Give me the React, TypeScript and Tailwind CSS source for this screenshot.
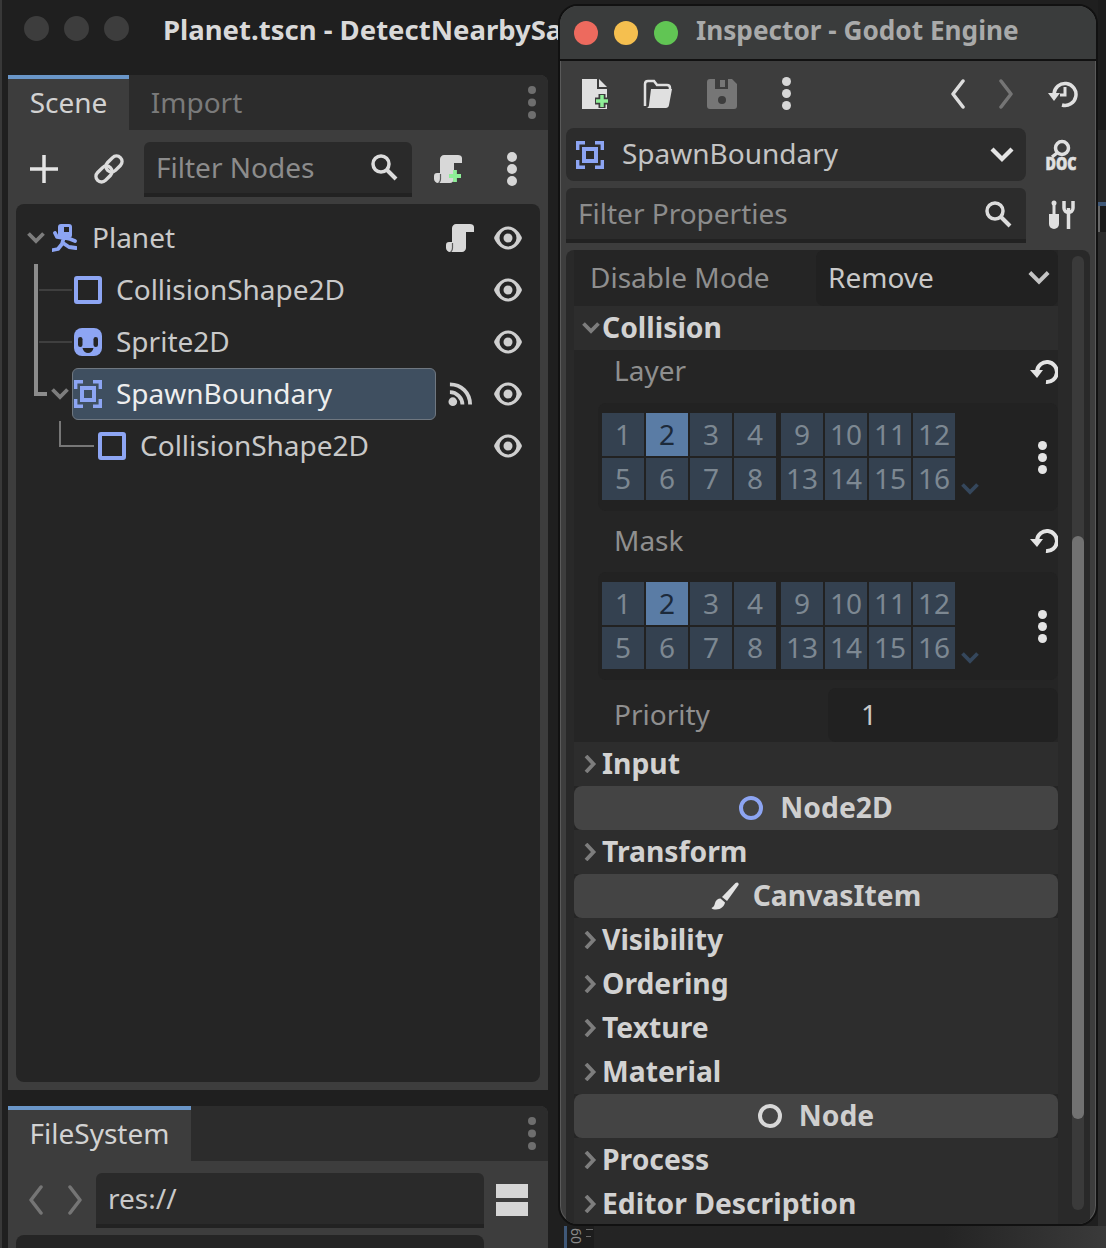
import React from "react";

const B = "#8da5f3";

function Eye() {
  return (
    <svg width="28" height="24" viewBox="0 0 28 24">
      <path d="M14 0.5C6.500 0.500 1.500 8 0 12c1.500 4 6.500 11.500 14 11.500S26.500 16 28 12C26.500 8 21.500 0.500 14 0.500Z" fill="#cfcfcf" />
      <circle cx="14" cy="12" r="8.500" fill="#252525" />
      <circle cx="14" cy="12" r="4.500" fill="#cfcfcf" />
    </svg>
  );
}

function Square() {
  return (
    <svg width="28" height="28" viewBox="0 0 28 28">
      <rect x="2" y="2" width="24" height="24" rx="1" fill="none" stroke={B} strokeWidth="4" />
    </svg>
  );
}

function Sprite() {
  return (
    <svg width="28" height="28" viewBox="0 0 28 28">
      <rect width="28" height="28" rx="8" fill={B} />
      <rect x="4" y="9" width="4.500" height="10" rx="2.200" fill="#252525" />
      <rect x="19.500" y="9" width="4.500" height="10" rx="2.200" fill="#252525" />
      <path d="M8.500 20h11c-.5 3-3 5-5.500 5s-5-2-5.500-5Z" fill="#252525" />
    </svg>
  );
}

function Area() {
  return (
    <svg width="28" height="28" viewBox="0 0 28 28">
      <path d="M1.700 9V1.700H9M19 1.700h7.300V9M26.300 19v7.300H19M9 26.300H1.700V19" fill="none" stroke={B} strokeWidth="3.400" />
      <rect x="8" y="8" width="12" height="12" fill="none" stroke={B} strokeWidth="4" />
    </svg>
  );
}

function Runner() {
  return (
    <svg width="25" height="28" viewBox="0 0 25 28">
      <rect x="6" y="0" width="14" height="14" rx="3" fill={B} />
      <rect x="12" y="3" width="5" height="5" fill="#252525" />
      <path d="M11 14L5 13 3 9M13 14L18 15 23 17M12 13L10 20 6 25 1 26M11 19L17 23 24 24" fill="none" stroke={B} strokeWidth="3.800" strokeLinejoin="round" strokeLinecap="round" />
    </svg>
  );
}

function Scroll({ plus = false }: { plus?: boolean }) {
  return (
    <svg width="28" height="28" viewBox="0 0 28 28">
      <path d="M10 0h14c2 0 4 1 4 3v5h-8v16c0 2-2 4-4 4H4c-2 0-4-2-4-4v-3c0-2 1-3 3-3h3V4c0-2 2-4 4-4Z" fill="#d8d8d8" />
      <path d="M6.500 19v5c0 2-1 3.500-2 4" fill="none" stroke="#5a5a5a" strokeWidth="1.200" />
      {plus && <path d="M21 15v12M15 21h12" stroke="#8eef97" strokeWidth="3.800" />}
    </svg>
  );
}

function Chevron({ dir = "down", color = "#7d7d7d", size = 18, w = 3.800 }: { dir?: "down" | "right"; color?: string; size?: number; w?: number }) {
  const d = dir === "down" ? "M1.500 4.500l7.500 7.500 7.500-7.500" : "M4 1l7.500 8L4 17";
  return (
    <svg width={size} height={size} viewBox="0 0 18 18">
      <path d={d} fill="none" stroke={color} strokeWidth={w} />
    </svg>
  );
}

function Dots({ color = "#d6d6d6", r = 4.500, gap = 12 }: { color?: string; r?: number; gap?: number }) {
  return (
    <svg width={r * 2} height={r * 2 + gap * 2} viewBox={`0 0 ${r * 2} ${r * 2 + gap * 2}`}>
      <circle cx={r} cy={r} r={r} fill={color} />
      <circle cx={r} cy={r + gap} r={r} fill={color} />
      <circle cx={r} cy={r + gap * 2} r={r} fill={color} />
    </svg>
  );
}

function Search() {
  return (
    <svg width="28" height="28" viewBox="0 0 28 28">
      <circle cx="11" cy="11" r="8" fill="none" stroke="#dcdcdc" strokeWidth="3.500" />
      <path d="M17 17l9 9" stroke="#dcdcdc" strokeWidth="4" />
    </svg>
  );
}

function Angle({ dir, color }: { dir: "l" | "r"; color: string }) {
  return (
    <svg width="16" height="30" viewBox="0 0 16 30">
      <path d={dir === "l" ? "M13 2L3 15l10 13" : "M3 2l10 13L3 28"} fill="none" stroke={color} strokeWidth="3.500" strokeLinecap="round" strokeLinejoin="round" />
    </svg>
  );
}

function Reset() {
  return (
    <svg width="28" height="26" viewBox="0 0 28 26">
      <path d="M7 12A10 10 0 1 1 16 23" fill="none" stroke="#e4e4e4" strokeWidth="4" />
      <path d="M0 11h13l-6 8Z" fill="#e4e4e4" />
    </svg>
  );
}

function Row({ indent, icon, label, extra }: { indent: string; icon: React.ReactNode; label: string; extra?: React.ReactNode }) {
  return (
    <div className="flex h-[52px] items-center">
      <div className={`flex items-center gap-[14px] ${indent}`}>
        {icon}
        <span className="pb-[2px] text-[#c9c9c9]">{label}</span>
      </div>
      <div className="ml-auto flex items-center gap-[20px] pr-[18px]">
        {extra}
        <Eye />
      </div>
    </div>
  );
}

function Bitmask() {
  const cell = (n: number) => (
    <div
      key={n}
      className={`flex h-full w-[42px] items-center justify-center pb-[2px] text-[28px] ${
        n === 2 ? "bg-[#5a7ca5] text-[#1c2a3b]" : "bg-[#344150] text-[#7d8892]"
      }`}
    >
      {n}
    </div>
  );
  const group = (nums: number[]) => (
    <div className="grid grid-cols-[repeat(4,42px)] grid-rows-[43px_42px] gap-[2px]">{nums.map(cell)}</div>
  );
  return (
    <div className="ml-[24px] flex h-[108px] w-[460px] items-start rounded-lg bg-[#222222] pl-[4px] pt-[10px]">
      <div className="flex gap-[5px]">
        {group([1, 2, 3, 4, 5, 6, 7, 8])}
        {group([9, 10, 11, 12, 13, 14, 15, 16])}
      </div>
      <div className="ml-[6px] self-end pb-[13px]">
        <Chevron color="#35475c" />
      </div>
      <div className="ml-auto mr-[11px] pt-[28px]">
        <Dots color="#e4e4e4" r={4.500} gap={12} />
      </div>
    </div>
  );
}

function Section({ label, open = false }: { label: string; open?: boolean }) {
  return (
    <div className="flex h-[44px] items-center bg-[#2d2d2d]">
      <div className="ml-[8px] flex w-[20px]">
        <Chevron dir={open ? "down" : "right"} />
      </div>
      <span className="pb-[2px] text-[28.300px] font-bold text-[#d2d2d2]">{label}</span>
    </div>
  );
}

function ClassBar({ icon, label }: { icon: React.ReactNode; label: string }) {
  return (
    <div className="flex h-[44px] items-center justify-center gap-[14px] rounded-lg bg-[#444444]">
      {icon}
      <span className="pb-[1px] text-[28.300px] font-bold text-[#cfcfcf]">{label}</span>
    </div>
  );
}

function Ring({ color }: { color: string }) {
  return (
    <svg className="mr-[3px]" width="24" height="24" viewBox="0 0 24 24">
      <circle cx="12" cy="12" r="10" fill="none" stroke={color} strokeWidth="4" />
    </svg>
  );
}

export default function App() {
  return (
    <div className="relative h-[1248px] w-[1106px] overflow-hidden bg-[#1f1f1f] text-[28px] leading-none [font-family:'Noto_Sans',sans-serif]">
      {/* Editor window */}
      <div className="absolute inset-0 border-l-2 border-[#383838] pl-[6px]">
        <div className="flex h-[75px] items-start pt-[16px]">
          <div className="ml-[16px] flex gap-[15px]">
            <span className="h-[25px] w-[25px] rounded-full bg-[#3d3d3d]" />
            <span className="h-[25px] w-[25px] rounded-full bg-[#3d3d3d]" />
            <span className="h-[25px] w-[25px] rounded-full bg-[#3d3d3d]" />
          </div>
          <span className="ml-[34px] whitespace-nowrap text-[27.500px] font-bold text-[#d9d9d9]">Planet.tscn - DetectNearbySamples</span>
        </div>

        <div className="w-[540px] rounded-t-lg bg-[#3d3d3d]">
          <div className="flex h-[55px] items-stretch rounded-t-lg bg-[#2c2c2c]">
            <div className="flex w-[121px] items-center justify-center border-t-4 border-[#6a96c8] bg-[#3d3d3d] pb-[6px] text-[#d2d2d2]">Scene</div>
            <div className="flex w-[135px] items-center justify-center pb-[2px] text-[#7a7a7a]">Import</div>
            <div className="ml-auto flex items-center pr-[12px]">
              <Dots color="#6e6e6e" r={4} gap={12.500} />
            </div>
          </div>
          <div className="flex h-[74px] items-center pt-[4px]">
            <svg className="ml-[22px]" width="28" height="28" viewBox="0 0 28 28">
              <path d="M14 0v28M0 14h28" stroke="#e4e4e4" strokeWidth="3.500" />
            </svg>
            <svg className="ml-[36px]" width="30" height="30" viewBox="0 0 30 30">
              <rect x="11" y="4.500" width="18" height="11" rx="5.500" transform="rotate(-45 20 10)" fill="none" stroke="#dcdcdc" strokeWidth="3.500" />
              <rect x="1" y="14.500" width="18" height="11" rx="5.500" transform="rotate(-45 10 20)" fill="none" stroke="#dcdcdc" strokeWidth="3.500" />
            </svg>
            <div className="ml-[20px] flex h-[55px] w-[268px] items-center rounded-t-md border-b-4 border-[#222222] bg-[#2a2a2a] pl-[12px] pr-[14px] text-[#8c8c8c]">
              Filter Nodes
              <div className="ml-auto">
                <Search />
              </div>
            </div>
            <div className="ml-[22px]">
              <Scroll plus />
            </div>
            <div className="ml-[45px]">
              <Dots r={5} gap={12} />
            </div>
          </div>
          <div className="px-[8px] pb-[8px]">
            <div className="relative h-[878px] rounded-lg bg-[#252525] pt-[8px]">
              {/* guide lines of the tree */}
              <span className="absolute left-[18px] top-[60px] h-[132px] w-[4px] bg-[#8c8c8c]" />
              <span className="absolute left-[18px] top-[188px] h-[4px] w-[13px] bg-[#8c8c8c]" />
              <span className="absolute left-[23px] top-[85px] h-[2px] w-[33px] bg-[#3f3f3f]" />
              <span className="absolute left-[23px] top-[137px] h-[2px] w-[33px] bg-[#3f3f3f]" />
              <span className="absolute left-[43px] top-[217px] h-[25px] w-[2px] bg-[#777777]" />
              <span className="absolute left-[43px] top-[241px] h-[2px] w-[35px] bg-[#777777]" />
              <span className="absolute left-[56px] top-[164px] h-[52px] w-[364px] rounded-md border border-[#6f7780] bg-[#3f4f60]" />
              <div className="relative">
                <Row
                  indent="pl-[11px]"
                  icon={
                    <span className="mr-[1px] flex items-center gap-[7px]">
                      <Chevron /> <Runner />
                    </span>
                  }
                  label="Planet"
                  extra={<Scroll />}
                />
                <Row indent="pl-[58px]" icon={<Square />} label="CollisionShape2D" />
                <Row indent="pl-[58px]" icon={<Sprite />} label="Sprite2D" />
                <div className="flex h-[52px] items-center">
                  <div className="flex items-center pl-[35px]">
                    <Chevron />
                    <span className="ml-[5px]">
                      <Area />
                    </span>
                    <span className="ml-[14px] pb-[2px] text-[#eeeeee]">SpawnBoundary</span>
                  </div>
                  <div className="ml-auto flex items-center gap-[21px] pr-[18px]">
                    <svg width="25" height="26" viewBox="0 0 26 26">
                      <circle cx="5" cy="21" r="4.500" fill="#d0d0d0" />
                      <path d="M2 11c7 0 13 6 13 13M2 3c12 0 21 9 21 21" fill="none" stroke="#d0d0d0" strokeWidth="4" />
                    </svg>
                    <Eye />
                  </div>
                </div>
                <Row indent="pl-[82px]" icon={<Square />} label="CollisionShape2D" />
              </div>
            </div>
          </div>
        </div>

        <div className="mt-[16px] w-[540px] rounded-t-lg bg-[#3d3d3d]">
          <div className="flex h-[55px] items-stretch rounded-t-lg bg-[#2c2c2c]">
            <div className="flex w-[183px] items-center justify-center border-t-4 border-[#6a96c8] bg-[#3d3d3d] pb-[6px] text-[#d2d2d2]">FileSystem</div>
            <div className="ml-auto flex items-center pr-[12px]">
              <Dots color="#6e6e6e" r={4} gap={12.500} />
            </div>
          </div>
          <div className="flex h-[74px] items-center pt-[4px]">
            <div className="ml-[20px] flex gap-[23px]">
              <Angle dir="l" color="#757575" />
              <Angle dir="r" color="#757575" />
            </div>
            <div className="ml-[13px] flex h-[55px] w-[388px] items-center rounded-t-md border-b-4 border-[#222222] bg-[#2a2a2a] pl-[12px] text-[#c9c9c9]">
              res://
            </div>
            <div className="ml-[12px] flex flex-col gap-[4px]">
              <span className="h-[14px] w-[32px] bg-[#d6d6d6]" />
              <span className="h-[14px] w-[32px] bg-[#d6d6d6]" />
            </div>
          </div>
          <div className="ml-[8px] h-[20px] w-[468px] rounded-t-lg bg-[#252525]" />
        </div>
      </div>

      {/* Editor viewport showing beside and below the Inspector window */}
      <div className="absolute left-[564px] top-[1226px] flex h-[22px] w-[542px] bg-gradient-to-r from-[#242424] from-70% to-[#3a3a3a]">
        <span className="w-[3px] bg-[#3f5878]" />
        <div className="flex w-[27px] items-start gap-[2px] bg-[#1d1d1d] pl-[1px] pt-[3px]">
          <span className="w-[16px] rotate-90 text-[14px] text-[#8a8a8a]">60</span>
          <div className="flex flex-col gap-[6px]">
            <span className="h-[1px] w-[7px] bg-[#6a6a6a]" />
            <span className="h-[1px] w-[5px] bg-[#6a6a6a]" />
          </div>
        </div>
      </div>
      <div className="absolute left-[1098px] top-0 flex h-[1226px] w-[8px] flex-col">
        <span className="h-[130px] bg-[#1c1c1c]" />
        <span className="h-[72px] bg-[#272727]" />
        <span className="h-[4px] bg-[#3f5878]" />
        <span className="h-[26px] border-l-2 border-[#666666] bg-[#1a1a1a]" />
        <span className="flex-1 bg-[#2c2c2c]" />
      </div>

      {/* Inspector window */}
      <div className="absolute left-[558px] top-[4px] h-[1222px] w-[540px] overflow-hidden rounded-[20px] border-2 border-[#111111] bg-[#3d3d3d] shadow-[inset_0_0_0_1px_#5a5a5a]">
        <div className="flex h-[55px] items-center border-b-2 border-[#111111] bg-[#3a3c3c]">
          <div className="ml-[14px] flex gap-[16px]">
            <span className="h-[24px] w-[24px] rounded-full bg-[#ed6a5e]" />
            <span className="h-[24px] w-[24px] rounded-full bg-[#f5bf4f]" />
            <span className="h-[24px] w-[24px] rounded-full bg-[#61c554]" />
          </div>
          <span className="ml-[18px] pb-[4px] text-[26.200px] font-bold text-[#a9aaaa]">Inspector - Godot Engine</span>
        </div>

        <div className="flex h-[67px] items-center pb-[2px]">
          <svg className="ml-[21px]" width="28" height="30" viewBox="0 0 28 30">
            <path d="M1 0h15v10h10v20H1Z" fill="#e0e0e0" />
            <path d="M18 0l8 8h-8Z" fill="#e0e0e0" />
            <path d="M21 15v14M14 22h14" stroke="#3d3d3d" strokeWidth="7" />
            <path d="M21 16v12M15 22h12" stroke="#8eef97" strokeWidth="3.500" />
          </svg>
          <svg className="ml-[34px]" width="30" height="30" viewBox="0 0 30 30">
            <path d="M2 27V5c0-2 1-3 3-3h6l3 4h10c2 0 3 1 3 3v1" fill="none" stroke="#e0e0e0" strokeWidth="2.500" />
            <path d="M8 10h21l-3 16c0 2-2 3-3 3H3c2 0 3-2 3-3Z" fill="#e0e0e0" />
          </svg>
          <svg className="ml-[34px]" width="30" height="30" viewBox="0 0 30 30">
            <path d="M3 0h5v10h13V0h4l5 5v22c0 2-1 3-3 3H3c-2 0-3-1-3-3V3c0-2 1-3 3-3Z" fill="#767676" />
            <rect x="13" y="1" width="5" height="7" fill="#767676" />
            <circle cx="15" cy="21" r="4" fill="#3d3d3d" />
          </svg>
          <div className="ml-[45px]">
            <Dots r={4.500} gap={12} />
          </div>
          <div className="ml-auto flex items-center gap-[32px] pr-[18px]">
            <Angle dir="l" color="#dcdcdc" />
            <Angle dir="r" color="#757575" />
            <svg className="ml-[2px]" width="30" height="28" viewBox="0 0 30 28">
              <path d="M6 14A11 11 0 1 1 14 25" fill="none" stroke="#e0e0e0" strokeWidth="3.500" />
              <path d="M0 13h12l-6 8Z" fill="#e0e0e0" />
              <path d="M17 7v8h-5" fill="none" stroke="#e0e0e0" strokeWidth="3" />
            </svg>
          </div>
        </div>

        <div className="flex h-[53px] items-center">
          <div className="ml-[6px] flex h-[53px] w-[460px] items-center rounded-lg bg-[#2c2c2c] pl-[10px] pr-[12px] text-[#c4c4c4]">
            <Area />
            <span className="ml-[18px] pb-[3px]">SpawnBoundary</span>
            <span className="ml-auto">
              <Chevron color="#e4e4e4" size={24} w={3.200} />
            </span>
          </div>
          <svg className="ml-[19px] overflow-visible" width="32" height="36" viewBox="0 0 32 36">
            <circle cx="17" cy="11" r="6.500" fill="none" stroke="#e0e0e0" strokeWidth="3.500" />
            <path d="M12 16l-5 4" stroke="#e0e0e0" strokeWidth="3.500" />
            <text x="16" y="33" textAnchor="middle" textLength="31" lengthAdjust="spacingAndGlyphs" fontSize="18" fontWeight="900" stroke="#e0e0e0" strokeWidth="0.600" fill="#e0e0e0" fontFamily="Noto Sans">
              DOC
            </text>
          </svg>
        </div>

        <div className="mt-[7px] flex h-[55px] items-start">
          <div className="ml-[6px] flex h-[55px] w-[460px] items-center rounded-t-md border-b-4 border-[#222222] bg-[#2c2c2c] pl-[12px] pr-[14px] text-[#8c8c8c]">
            <span className="pb-[2px]">Filter Properties</span>
            <span className="ml-auto">
              <Search />
            </span>
          </div>
          <svg className="ml-[23px] mt-[12px]" width="26" height="30" viewBox="0 0 26 30">
            <circle cx="5" cy="3" r="2.500" fill="#e0e0e0" />
            <path d="M5 3v12" stroke="#e0e0e0" strokeWidth="3" />
            <path d="M0 14h10v10a5 5 0 0 1-10 0Z" fill="#e0e0e0" />
            <path d="M15 1v7a4.500 4.500 0 0 0 9 0V1M19.500 8v21" fill="none" stroke="#e0e0e0" strokeWidth="3.500" />
          </svg>
        </div>

        <div className="relative ml-[6px] mt-[7px] h-[980px] w-[524px] rounded-t-lg bg-[#292929] pl-[8px]">
          <div className="w-[484px] bg-[#252525]">
            <div className="flex h-[56px] items-center">
              <span className="ml-[16px] w-[226px] pb-[2px] text-[#8f8f8f]">Disable Mode</span>
              <div className="flex h-[56px] flex-1 items-center rounded-lg bg-[#212121] pl-[12px] pr-[8px] text-[#c9c9c9]">
                <span className="pb-[2px]">Remove</span>
                <span className="ml-auto">
                  <Chevron color="#c4c4c4" size={22} w={3.200} />
                </span>
              </div>
            </div>
            <Section label="Collision" open />
            <div className="flex h-[44px] items-center justify-between pl-[40px] text-[#8f8f8f]">
              <span className="pb-[4px]">Layer</span>
              <Reset />
            </div>
            <div className="pt-[9px]">
              <Bitmask />
            </div>
            <div className="mt-[8px] flex h-[44px] items-center justify-between pl-[40px] text-[#8f8f8f]">
              <span className="pb-[2px]">Mask</span>
              <Reset />
            </div>
            <div className="pt-[9px]">
              <Bitmask />
            </div>
            <div className="mt-[8px] flex h-[54px] items-center">
              <span className="ml-[40px] w-[214px] pb-[2px] text-[#8f8f8f]">Priority</span>
              <div className="flex h-[54px] flex-1 items-center rounded-lg bg-[#212121] pb-[2px] pl-[33px] text-[#c9c9c9]">1</div>
            </div>
            <Section label="Input" />
            <ClassBar icon={<Ring color={B} />} label="Node2D" />
            <Section label="Transform" />
            <ClassBar
              icon={
                <svg width="28" height="28" viewBox="0 0 28 28">
                  <path d="M26 .5c1.500 0 2 1.500 1.500 2.500L16 19l-5-4L24.500 1Z" fill="#e4e4e4" />
                  <path d="M9.500 16.500L14 20.500C13.500 24 10 27.500 5 27.500 3 27.500 1 27 .5 26 3 25 3.500 23 4 21 4.500 18.500 7 16.500 9.500 16.500Z" fill="#e4e4e4" />
                </svg>
              }
              label="CanvasItem"
            />
            <Section label="Visibility" />
            <Section label="Ordering" />
            <Section label="Texture" />
            <Section label="Material" />
            <ClassBar icon={<Ring color="#d8d8d8" />} label="Node" />
            <Section label="Process" />
            <Section label="Editor Description" />
          </div>
          {/* scrollbar */}
          <div className="absolute left-[506px] top-[6px] h-[954px] w-[12px] rounded-md bg-[#3a3a3a]">
            <div className="absolute left-0 top-[280px] h-[583px] w-[12px] rounded-md bg-[#727272]" />
          </div>
        </div>
      </div>
    </div>
  );
}
